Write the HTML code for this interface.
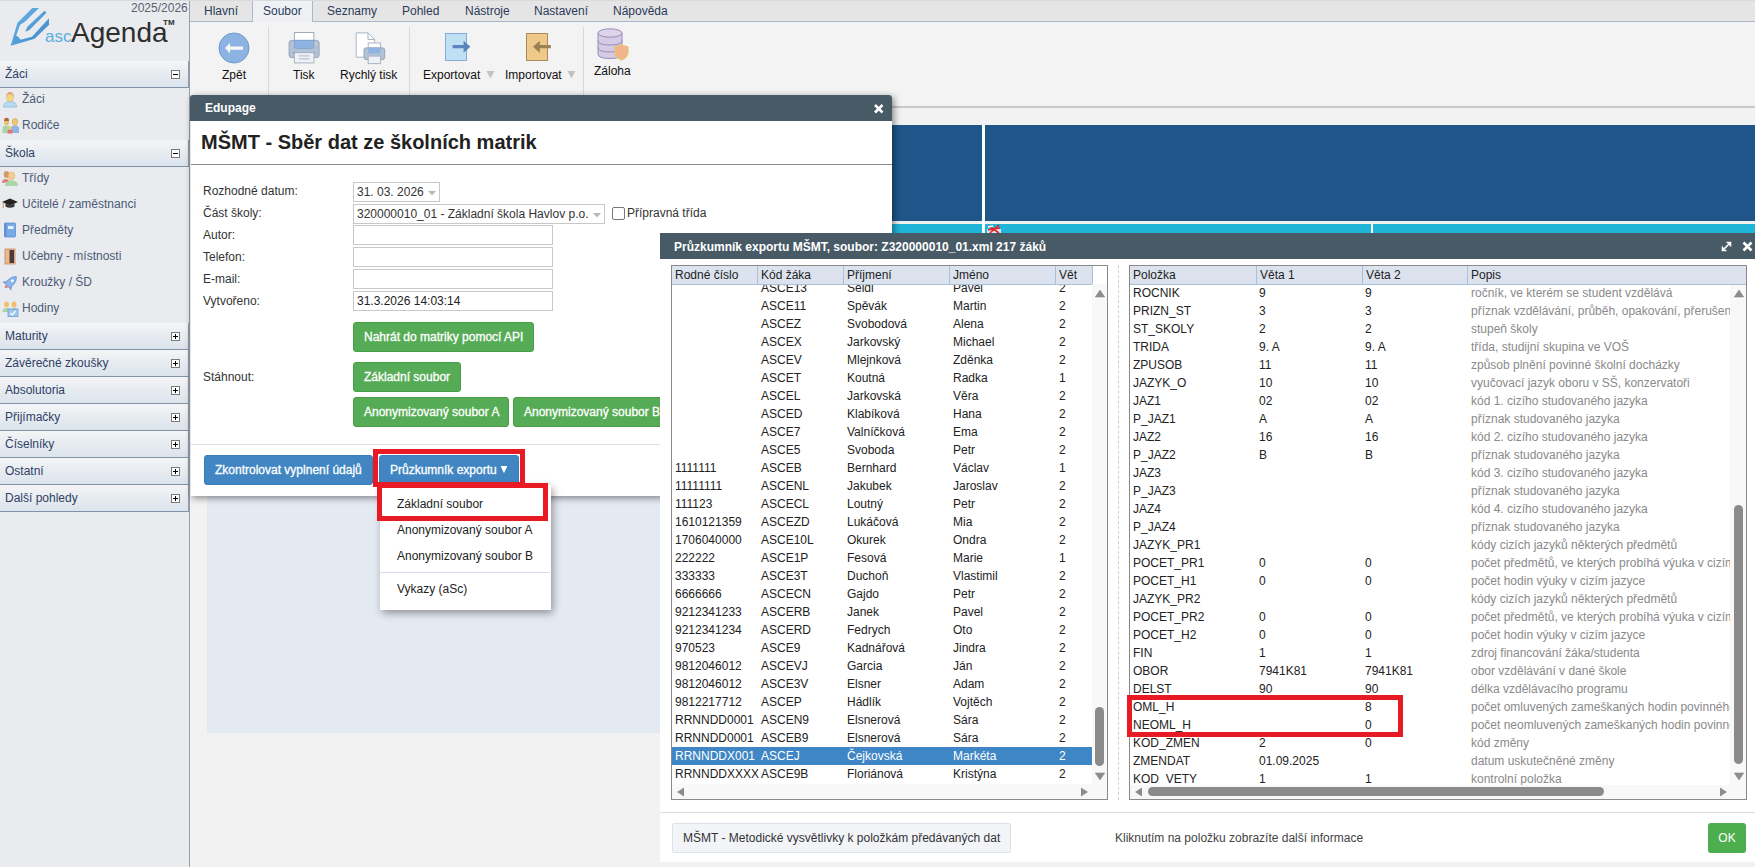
<!DOCTYPE html><html><head><meta charset="utf-8"><style>
*{box-sizing:border-box;margin:0;padding:0}
html,body{width:1755px;height:867px;overflow:hidden;font-family:"Liberation Sans",sans-serif;font-size:12px;background:#f2f2f2;position:relative;color:#222}
.a{position:absolute}
.t{position:absolute;line-height:14px;white-space:nowrap}
#side{left:0;top:0;width:190px;height:867px;background:#e9ebee;border-right:1px solid #999ea6}
.sh{position:absolute;left:0;width:189px;height:27px;background:linear-gradient(#f4f5f6,#dbe3ec);border-bottom:1px solid #8293a8;border-right:1px solid #8e9aab;color:#2e4165;line-height:26px;padding-left:5px}
.sh .bx{position:absolute;left:171px;top:9px;width:9px;height:9px;border:1px solid #7a7a7a;background:#fff}
.sh .bx:before{content:"";position:absolute;left:1px;top:3px;width:5px;height:1px;background:#000}
.sh .bx.p:after{content:"";position:absolute;left:3px;top:1px;width:1px;height:5px;background:#000}
.si{position:absolute;left:0;width:189px;height:26px;color:#4b5a77;line-height:22px;padding-left:22px}
.si svg{position:absolute;left:2px;top:3px}
#tabs{left:190px;top:0;width:1565px;height:22px;background:#e5e5e5;border-bottom:1px solid #a9b8ca}
.tab{position:absolute;top:0;height:22px;color:#2a3a58;line-height:30px;text-align:center}
#ribbon{left:190px;top:22px;width:1565px;height:86px;background:#f3f3f3;border-bottom:2px solid #c9c9c9}
.rl{position:absolute;color:#111;white-space:nowrap;line-height:14px}
.sep{position:absolute;top:27px;width:1px;height:68px;background:#d9d9d9}
</style></head><body>
<div id="side" class="a">
<svg class="a" style="left:0;top:0" width="190" height="60" viewBox="0 0 190 60">
<defs><linearGradient id="pg" x1="0" y1="0" x2="1" y2="1"><stop offset="0" stop-color="#6cb7e6"/><stop offset="1" stop-color="#3b84cb"/></linearGradient></defs>
<path fill="url(#pg)" d="M10.7,45.8 L17.5,22.7 L32.3,8.1 L39,8.1 L25.2,21.6 L20,25 L16.2,35.6 Q19,37 20.6,39.8 L32,36.7 L48.9,18.2 L49.1,24.7 L34.6,38.7 Z"/>
<path fill="url(#pg)" d="M44.5,10.7 L46.5,12.8 L29.4,29.9 L25.2,31.7 L27.3,26.8 Z"/>
</svg>
<div class="t" style="left:131px;top:1px;color:#5b6270;font-size:12px">2025/2026</div>
<div class="t" style="left:45px;top:27px;color:#5aaee0;font-size:17px;line-height:20px">asc</div>
<div class="t" style="left:71px;top:17px;color:#2e2e2e;font-size:28px;line-height:32px">Agenda</div>
<div class="t" style="left:163px;top:18px;color:#2e2e2e;font-size:8px;font-weight:bold;line-height:10px">TM</div>
<div class="sh" style="top:61px">Žáci<div class="bx"></div></div>
<div class="si" style="top:88px"><svg width="16" height="17" viewBox="0 0 16 17"><path d="M1.5,16 Q1.5,10.5 8,10.5 Q14.5,10.5 14.5,16Z" fill="#b9dcf2" stroke="#90b8d8" stroke-width=".8"/><ellipse cx="8" cy="6" rx="3.6" ry="4.6" fill="#f0d88a" stroke="#d4b260" stroke-width=".6"/><path d="M4.3,5.5 Q4.5,1 8,1 Q11.5,1 11.7,5.5 Q10,3 8,3.5 Q6,3 4.3,5.5Z" fill="#e8a77c"/></svg>Žáci</div>
<div class="si" style="top:114px"><svg width="18" height="17" viewBox="0 0 18 17"><path d="M0.5,16 L0.5,11 Q0.5,8.5 4.5,8.5 Q8.5,8.5 8.5,11 L8.5,16Z" fill="#a8d5a5"/><ellipse cx="4.5" cy="5" rx="2.5" ry="3.3" fill="#e8c070"/><path d="M2,4 Q2,0.8 4.5,0.8 Q7,0.8 7,4Z" fill="#a86c3c"/><path d="M9,16 L9,11 Q9,8.5 13,8.5 Q17,8.5 17,11 L17,16Z" fill="#8db6e4"/><ellipse cx="13" cy="5" rx="2.6" ry="3.4" fill="#f0c878" stroke="#dcaa58" stroke-width=".8"/><path d="M5.5,16.5 L5.5,14 Q5.5,12.5 8,12.5 Q10.5,12.5 10.5,14 L10.5,16.5Z" fill="#e57373"/><circle cx="8" cy="10.8" r="1.7" fill="#f0c878"/></svg>Rodiče</div>
<div class="sh" style="top:140px">Škola<div class="bx"></div></div>
<div class="si" style="top:167px"><svg width="16" height="17" viewBox="0 0 16 17"><path d="M0,13 Q0,9 4,9 Q7,9 7,12Z" fill="#e57b7b"/><ellipse cx="4.5" cy="4.5" rx="2.8" ry="3.5" fill="#d69a6a"/><path d="M3,16 Q3,10.5 9.5,10.5 Q16,10.5 16,16Z" fill="#a9d6a6"/><ellipse cx="9.5" cy="6" rx="3.2" ry="4" fill="#f3cf8c" stroke="#d8b070" stroke-width=".6"/></svg>Třídy</div>
<div class="si" style="top:193px"><svg width="16" height="17" viewBox="0 0 16 17"><path d="M0,6 L8,2.5 L16,6 L8,9.5Z" fill="#222"/><path d="M3.5,7.5 L3.5,10.5 Q8,13 12.5,10.5 L12.5,7.5 L8,9.5Z" fill="#333"/><path d="M1.3,6.5 L1.3,12" stroke="#d49a5a" stroke-width="1"/></svg>Učitelé / zaměstnanci</div>
<div class="si" style="top:219px"><svg width="16" height="17" viewBox="0 0 16 17"><rect x="2.5" y="1" width="11" height="14" rx="1" fill="#7aaae6" stroke="#5b8fd0" stroke-width=".8"/><rect x="2.5" y="1" width="2" height="14" fill="#5b8fd0"/><rect x="6" y="4" width="5.5" height="3" fill="#e8f0fa"/></svg>Předměty</div>
<div class="si" style="top:245px"><svg width="16" height="17" viewBox="0 0 16 17"><rect x="3" y="1" width="10" height="15" fill="#f0b88a" stroke="#c08860" stroke-width=".8"/><rect x="7.5" y="2" width="4.5" height="13" fill="#4a3b3b"/></svg>Učebny - místnosti</div>
<div class="si" style="top:271px"><svg width="17" height="17" viewBox="0 0 17 17"><g transform="rotate(45 8.5 8.5)"><path d="M8.5,0.3 Q12,3 12,8 L12,13 L5,13 L5,8 Q5,3 8.5,0.3Z" fill="#8ab8ea" stroke="#5e94d4" stroke-width=".8"/><path d="M5,9.5 L2.3,14 L5,13.5Z M12,9.5 L14.7,14 L12,13.5Z" fill="#6e9ed6"/><circle cx="8.5" cy="6" r="1.4" fill="#fff"/><path d="M6.5,13.3 L8.5,16.8 L10.5,13.3Z" fill="#e57373"/></g></svg>Kroužky / ŠD</div>
<div class="si" style="top:297px"><svg width="17" height="17" viewBox="0 0 17 17"><ellipse cx="4.5" cy="4.5" rx="2.5" ry="3" fill="#f0c070"/><ellipse cx="12" cy="4.5" rx="2.5" ry="3" fill="#f0c070"/><path d="M0.5,12 Q0.5,8 4.5,8 Q8.5,8 8.5,12Z" fill="#a8d5a5"/><path d="M8,12 Q8,8 12,8 Q16,8 16,12Z" fill="#a8d5a5"/><rect x="6" y="9" width="10" height="7.5" fill="#9cc6ee" stroke="#6e9ed6" stroke-width=".8"/><path d="M8.5,13 L10.3,14.8 L13.5,11" stroke="#fff" stroke-width="1.2" fill="none"/></svg>Hodiny</div>
<div class="sh" style="top:323px">Maturity<div class="bx p"></div></div>
<div class="sh" style="top:350px">Závěrečné zkoušky<div class="bx p"></div></div>
<div class="sh" style="top:377px">Absolutoria<div class="bx p"></div></div>
<div class="sh" style="top:404px">Přijímačky<div class="bx p"></div></div>
<div class="sh" style="top:431px">Číselníky<div class="bx p"></div></div>
<div class="sh" style="top:458px">Ostatní<div class="bx p"></div></div>
<div class="sh" style="top:485px">Další pohledy<div class="bx p"></div></div>
</div>
<div id="tabs" class="a">
<div class="tab" style="left:62px;width:61px;background:#eef0f3;border-left:1px solid #a9b8ca;border-right:1px solid #a9b8ca;height:22px"></div>
<div class="t" style="left:14px;top:4px;color:#2a3a58">Hlavní</div>
<div class="t" style="left:73px;top:4px;color:#2a3a58">Soubor</div>
<div class="t" style="left:137px;top:4px;color:#2a3a58">Seznamy</div>
<div class="t" style="left:212px;top:4px;color:#2a3a58">Pohled</div>
<div class="t" style="left:275px;top:4px;color:#2a3a58">Nástroje</div>
<div class="t" style="left:344px;top:4px;color:#2a3a58">Nastavení</div>
<div class="t" style="left:423px;top:4px;color:#2a3a58">Nápověda</div>
</div>
<div id="ribbon" class="a"></div>
<div class="sep" style="left:268px"></div><div class="sep" style="left:409px"></div><div class="sep" style="left:583px"></div>
<svg class="a" style="left:218px;top:32px" width="32" height="32" viewBox="0 0 32 32"><circle cx="16" cy="16" r="15" fill="#8db3e3" stroke="#6d98d0" stroke-width="1"/><path d="M7,16.1 L12,10.9 L12,14.4 L25,14.4 L25,17.8 L12,17.8 L12,21.2Z" fill="#f7f7f7"/></svg>
<svg class="a" style="left:288px;top:32px" width="32" height="32" viewBox="0 0 32 32">
<rect x="6.4" y="0.5" width="19.5" height="8" fill="#fff" stroke="#9eabbd" stroke-width="1"/>
<rect x="1.1" y="8.4" width="30" height="17.2" rx="2.5" fill="#b3c1d4" stroke="#95a5bb" stroke-width="1"/>
<path d="M6.4,8.4 L25.9,8.4 L25.9,14.6 Q25.9,16.6 23.9,16.6 L8.4,16.6 Q6.4,16.6 6.4,14.6Z" fill="#8fb3e3" stroke="#7a9fd0" stroke-width=".8"/>
<rect x="5" y="20" width="22" height="2" fill="#8a9ab0"/>
<rect x="6.4" y="20.7" width="19.5" height="10.2" fill="#eef2f7" stroke="#a9b5c5" stroke-width="1"/>
<path d="M10.9,23.9 L21.4,23.9 M10.9,26.9 L21.4,26.9" stroke="#a9b6c8" stroke-width="1"/>
<rect x="27" y="11" width="1.6" height="1.6" fill="#f4e08a"/>
</svg>
<svg class="a" style="left:355px;top:32px" width="32" height="33" viewBox="0 0 32 33">
<path d="M1.2,0.9 L13,0.9 L19.6,7.5 L19.6,25.2 L1.2,25.2Z" fill="#fff" stroke="#a9b5c5" stroke-width="1"/>
<path d="M13,0.9 L13,7.5 L19.6,7.5" fill="none" stroke="#a9b5c5" stroke-width="1"/>
<rect x="13.2" y="11" width="12.4" height="5" fill="#fff" stroke="#a9b5c5" stroke-width="1"/>
<rect x="9" y="15.9" width="20.7" height="11.6" rx="2" fill="#b3c1d4" stroke="#95a5bb" stroke-width="1"/>
<path d="M13.2,15.9 L25.6,15.9 L25.6,20 Q25.6,21.5 24,21.5 L14.8,21.5 Q13.2,21.5 13.2,20Z" fill="#8fb3e3"/>
<rect x="13.2" y="24.1" width="12.4" height="7.5" fill="#eef2f7" stroke="#a9b5c5" stroke-width="1"/>
</svg>
<svg class="a" style="left:444px;top:32px" width="30" height="30" viewBox="0 0 30 30">
<rect x="1.5" y="1.5" width="21" height="27" fill="#bfdff3" stroke="#86a9d6" stroke-width="1"/>
<path d="M8.6,13.1 L19.6,13.1 L19.6,8.7 L26.4,14.65 L19.6,20.7 L19.6,16.2 L8.6,16.2Z" fill="#5a84bd"/>
</svg>
<svg class="a" style="left:525px;top:32px" width="30" height="30" viewBox="0 0 30 30">
<rect x="1.5" y="1.5" width="21" height="27" fill="#eec98a" stroke="#a98b58" stroke-width="1"/>
<path d="M25.8,13.1 L14.8,13.1 L14.8,8.7 L8,14.65 L14.8,20.7 L14.8,16.2 L25.8,16.2Z" fill="#9a8054"/>
</svg>
<svg class="a" style="left:597px;top:28px" width="34" height="34" viewBox="0 0 34 34">
<path d="M1,5 L1,26 Q1,30.5 13,30.5 Q25,30.5 25,26 L25,5Z" fill="#d5cbe4" stroke="#9d8cbb" stroke-width="1"/>
<ellipse cx="13" cy="5" rx="12" ry="4.2" fill="#ddd4ea" stroke="#9d8cbb" stroke-width="1"/>
<path d="M1,12.5 Q1,17 13,17 Q25,17 25,12.5 M1,19.5 Q1,24 13,24 Q25,24 25,19.5" fill="none" stroke="#9d8cbb" stroke-width="1"/>
<path d="M24.5,17 L31,19 L31,24 Q31,29 24.5,32 Q18,29 18,24 L18,19Z" fill="#f2b48f" stroke="#e3c66e" stroke-width="1.3"/>
</svg>
<div class="rl" style="left:222px;top:68px">Zpět</div>
<div class="rl" style="left:293px;top:68px">Tisk</div>
<div class="rl" style="left:340px;top:68px">Rychlý tisk</div>
<div class="rl" style="left:423px;top:68px">Exportovat</div>
<div class="rl" style="left:505px;top:68px">Importovat</div>
<div class="rl" style="left:594px;top:64px">Záloha</div>
<svg class="a" style="left:486px;top:70px" width="10" height="9"><path d="M0.5,1 L8.5,1 L4.5,8.5Z" fill="#c2c2c2"/></svg>
<svg class="a" style="left:567px;top:70px" width="10" height="9"><path d="M0.5,1 L8.5,1 L4.5,8.5Z" fill="#c2c2c2"/></svg>
<div class="a" style="left:891px;top:125px;width:864px;height:96px;background:#20558a"></div>
<div class="a" style="left:891px;top:224px;width:864px;height:10px;background:#1fb5d9"></div>
<div class="a" style="left:982px;top:125px;width:3px;height:109px;background:#fff"></div>
<div class="a" style="left:1371px;top:224px;width:2px;height:10px;background:#fff"></div>
<svg class="a" style="left:986px;top:224px" width="16" height="10" viewBox="0 0 16 10"><rect x="1" y="5" width="14" height="5" fill="#cfe8f8"/><path d="M3,2 L13,9 M13,1 L4,9 M2,6 L14,4" stroke="#ee2222" stroke-width="1.6"/><path d="M2,3 L7,2" stroke="#fff" stroke-width="1.5"/></svg>
<div class="a" style="left:207px;top:495px;width:460px;height:238px;background:#e4eaf2"></div>
<style>
#d1{left:190px;top:95px;width:702px;height:401px;background:#fff;box-shadow:2px 2px 7px rgba(0,0,0,.45);border-radius:3px 3px 0 0}
.inp{position:absolute;background:#fff;border:1px solid #c8c8c8}
.lb{position:absolute;color:#333;white-space:nowrap;line-height:14px}
.gb{position:absolute;background:#56ac56;border:1px solid #47a047;color:#fff;border-radius:3px;white-space:nowrap;padding-left:10px;font-size:12px;-webkit-text-stroke:0.3px #fff}
.bb{position:absolute;background:#4186c2;border:1px solid #3a7cb8;color:#fff;border-radius:3px;white-space:nowrap;font-size:12px;-webkit-text-stroke:0.3px #fff}
.red{position:absolute;border:5px solid #e81b24}
</style>
<div id="d1" class="a">
<div class="a" style="left:0;top:0;width:702px;height:26px;background:#475a66;border-radius:3px 3px 0 0"></div>
<div class="t" style="left:15px;top:6px;color:#fff;font-weight:bold">Edupage</div>
<svg class="a" style="left:684px;top:9px" width="10" height="10" viewBox="0 0 10 10"><path d="M1,1 L8.5,8.5 M8.5,1 L1,8.5" stroke="#fff" stroke-width="2.5"/></svg>
<div class="t" style="left:11px;top:35px;font-size:20px;line-height:24px;font-weight:bold;color:#222">MŠMT - Sběr dat ze školních matrik</div>
<div class="a" style="left:1px;top:69px;width:701px;height:1px;background:#8a8a8a"></div>
<div class="a" style="left:0;top:26px;width:1px;height:375px;background:#e6e6e6"></div>
<div class="lb" style="left:13px;top:89px">Rozhodné datum:</div>
<div class="lb" style="left:13px;top:111px">Část školy:</div>
<div class="lb" style="left:13px;top:133px">Autor:</div>
<div class="lb" style="left:13px;top:155px">Telefon:</div>
<div class="lb" style="left:13px;top:177px">E-mail:</div>
<div class="lb" style="left:13px;top:199px">Vytvořeno:</div>
<div class="inp" style="left:163px;top:87px;width:87px;height:20px"></div>
<div class="t" style="left:167px;top:90px;color:#333">31. 03. 2026</div>
<svg class="a" style="left:238px;top:96px" width="8" height="5"><path d="M0,0 L8,0 L4,4.5Z" fill="#b8b8b8"/></svg>
<div class="inp" style="left:163px;top:109px;width:252px;height:20px"></div>
<div class="t" style="left:167px;top:112px;color:#333">320000010_01 - Základní škola Havlov p.o.</div>
<svg class="a" style="left:403px;top:118px" width="8" height="5"><path d="M0,0 L8,0 L4,4.5Z" fill="#b8b8b8"/></svg>
<div class="inp" style="left:422px;top:112px;width:13px;height:13px;border-color:#777;border-radius:2px"></div>
<div class="t" style="left:437px;top:111px;color:#333">Přípravná třída</div>
<div class="inp" style="left:163px;top:130px;width:200px;height:20px"></div>
<div class="inp" style="left:163px;top:152px;width:200px;height:20px"></div>
<div class="inp" style="left:163px;top:174px;width:200px;height:20px"></div>
<div class="inp" style="left:163px;top:196px;width:200px;height:20px"></div>
<div class="t" style="left:167px;top:199px;color:#222">31.3.2026 14:03:14</div>
<div class="gb" style="left:163px;top:227px;width:181px;height:30px;line-height:29px">Nahrát do matriky pomocí API</div>
<div class="lb" style="left:13px;top:275px">Stáhnout:</div>
<div class="gb" style="left:163px;top:267px;width:108px;height:30px;line-height:29px">Základní soubor</div>
<div class="gb" style="left:163px;top:302px;width:156px;height:30px;line-height:29px">Anonymizovaný soubor A</div>
<div class="gb" style="left:323px;top:302px;width:160px;height:30px;line-height:29px">Anonymizovaný soubor B</div>
<div class="a" style="left:0;top:349px;width:700px;height:1px;background:#dedede"></div>
<div class="bb" style="left:14px;top:360px;width:169px;height:30px;line-height:29px;padding-left:10px">Zkontrolovat vyplnení údajů</div>
<div class="bb" style="left:189px;top:360px;width:140px;height:30px;line-height:29px;padding-left:10px">Průzkumník exportu</div>
</div>
<svg class="a" style="left:500px;top:465px" width="8" height="9"><path d="M0.6,1 L7.4,1 L4,8.2Z" fill="#fff"/></svg>
<div class="red" style="left:373px;top:449px;width:152px;height:38px"></div>
<div class="a" style="left:380px;top:485px;width:171px;height:125px;background:#fff;box-shadow:2px 3px 8px rgba(0,0,0,.38)"></div>
<div class="t" style="left:397px;top:497px;color:#222">Základní soubor</div>
<div class="t" style="left:397px;top:523px;color:#222">Anonymizovaný soubor A</div>
<div class="t" style="left:397px;top:549px;color:#222">Anonymizovaný soubor B</div>
<div class="t" style="left:397px;top:582px;color:#222">Vykazy (aSc)</div>
<div class="a" style="left:380px;top:572px;width:170px;height:1px;background:#d5dde8"></div>
<div class="red" style="left:377px;top:483px;width:171px;height:38px"></div>
<style>
#d2{left:660px;top:234px;width:1095px;height:628px;background:#fff}
.tb{position:absolute;border:1px solid #8a8a8a;background:#fff;overflow:hidden}
.th{position:absolute;top:0;height:19px;background:#dce3ee;border-bottom:1px solid #a9c0da}
.thc{position:absolute;top:0;height:18px;border-left:1px solid #a9c0da;line-height:18px;padding-left:3px;color:#222;white-space:nowrap}
.row{position:absolute;left:0;height:18px;line-height:18px;white-space:nowrap;color:#222}
.row span{position:absolute;top:0}
.row.sel{background:#3e86c5;color:#fff}
.g{color:#8a8a8a}
</style>
<div id="d2" class="a">
<div class="a" style="left:0;top:-1px;width:1095px;height:26px;background:#475a66"></div>
<div class="t" style="left:14px;top:6px;color:#fff;font-weight:bold">Průzkumník exportu MŠMT, soubor: Z320000010_01.xml 217 žáků</div>
<svg class="a" style="left:1061px;top:7px" width="11" height="11" viewBox="0 0 11 11"><path d="M2,9 L9,2 M5.5,1.5 L9.5,1.5 L9.5,5.5 M1.5,5.5 L1.5,9.5 L5.5,9.5" stroke="#fff" stroke-width="1.6" fill="none"/></svg>
<svg class="a" style="left:1082px;top:7px" width="11" height="11" viewBox="0 0 11 11"><path d="M1.5,1.5 L9.5,9.5 M9.5,1.5 L1.5,9.5" stroke="#fff" stroke-width="2.6"/></svg>
<div class="tb" style="left:11px;top:31px;width:437px;height:535px">
<div class="a" style="left:0;top:0;width:436px;height:518px;overflow:hidden">
<div class="row" style="top:13px;width:420px"><span style="left:3px"></span><span style="left:89px">ASCE13</span><span style="left:175px">Seidl</span><span style="left:281px">Pavel</span><span style="left:387px">2</span></div>
<div class="row" style="top:31px;width:420px"><span style="left:3px"></span><span style="left:89px">ASCE11</span><span style="left:175px">Spěvák</span><span style="left:281px">Martin</span><span style="left:387px">2</span></div>
<div class="row" style="top:49px;width:420px"><span style="left:3px"></span><span style="left:89px">ASCEZ</span><span style="left:175px">Svobodová</span><span style="left:281px">Alena</span><span style="left:387px">2</span></div>
<div class="row" style="top:67px;width:420px"><span style="left:3px"></span><span style="left:89px">ASCEX</span><span style="left:175px">Jarkovský</span><span style="left:281px">Michael</span><span style="left:387px">2</span></div>
<div class="row" style="top:85px;width:420px"><span style="left:3px"></span><span style="left:89px">ASCEV</span><span style="left:175px">Mlejnková</span><span style="left:281px">Zděnka</span><span style="left:387px">2</span></div>
<div class="row" style="top:103px;width:420px"><span style="left:3px"></span><span style="left:89px">ASCET</span><span style="left:175px">Koutná</span><span style="left:281px">Radka</span><span style="left:387px">1</span></div>
<div class="row" style="top:121px;width:420px"><span style="left:3px"></span><span style="left:89px">ASCEL</span><span style="left:175px">Jarkovská</span><span style="left:281px">Věra</span><span style="left:387px">2</span></div>
<div class="row" style="top:139px;width:420px"><span style="left:3px"></span><span style="left:89px">ASCED</span><span style="left:175px">Klabíková</span><span style="left:281px">Hana</span><span style="left:387px">2</span></div>
<div class="row" style="top:157px;width:420px"><span style="left:3px"></span><span style="left:89px">ASCE7</span><span style="left:175px">Valníčková</span><span style="left:281px">Ema</span><span style="left:387px">2</span></div>
<div class="row" style="top:175px;width:420px"><span style="left:3px"></span><span style="left:89px">ASCE5</span><span style="left:175px">Svoboda</span><span style="left:281px">Petr</span><span style="left:387px">2</span></div>
<div class="row" style="top:193px;width:420px"><span style="left:3px">1111111</span><span style="left:89px">ASCEB</span><span style="left:175px">Bernhard</span><span style="left:281px">Václav</span><span style="left:387px">1</span></div>
<div class="row" style="top:211px;width:420px"><span style="left:3px">11111111</span><span style="left:89px">ASCENL</span><span style="left:175px">Jakubek</span><span style="left:281px">Jaroslav</span><span style="left:387px">2</span></div>
<div class="row" style="top:229px;width:420px"><span style="left:3px">111123</span><span style="left:89px">ASCECL</span><span style="left:175px">Loutný</span><span style="left:281px">Petr</span><span style="left:387px">2</span></div>
<div class="row" style="top:247px;width:420px"><span style="left:3px">1610121359</span><span style="left:89px">ASCEZD</span><span style="left:175px">Lukáčová</span><span style="left:281px">Mia</span><span style="left:387px">2</span></div>
<div class="row" style="top:265px;width:420px"><span style="left:3px">1706040000</span><span style="left:89px">ASCE10L</span><span style="left:175px">Okurek</span><span style="left:281px">Ondra</span><span style="left:387px">2</span></div>
<div class="row" style="top:283px;width:420px"><span style="left:3px">222222</span><span style="left:89px">ASCE1P</span><span style="left:175px">Fesová</span><span style="left:281px">Marie</span><span style="left:387px">1</span></div>
<div class="row" style="top:301px;width:420px"><span style="left:3px">333333</span><span style="left:89px">ASCE3T</span><span style="left:175px">Duchoň</span><span style="left:281px">Vlastimil</span><span style="left:387px">2</span></div>
<div class="row" style="top:319px;width:420px"><span style="left:3px">6666666</span><span style="left:89px">ASCECN</span><span style="left:175px">Gajdo</span><span style="left:281px">Petr</span><span style="left:387px">2</span></div>
<div class="row" style="top:337px;width:420px"><span style="left:3px">9212341233</span><span style="left:89px">ASCERB</span><span style="left:175px">Janek</span><span style="left:281px">Pavel</span><span style="left:387px">2</span></div>
<div class="row" style="top:355px;width:420px"><span style="left:3px">9212341234</span><span style="left:89px">ASCERD</span><span style="left:175px">Fedrych</span><span style="left:281px">Oto</span><span style="left:387px">2</span></div>
<div class="row" style="top:373px;width:420px"><span style="left:3px">970523</span><span style="left:89px">ASCE9</span><span style="left:175px">Kadnářová</span><span style="left:281px">Jindra</span><span style="left:387px">2</span></div>
<div class="row" style="top:391px;width:420px"><span style="left:3px">9812046012</span><span style="left:89px">ASCEVJ</span><span style="left:175px">Garcia</span><span style="left:281px">Ján</span><span style="left:387px">2</span></div>
<div class="row" style="top:409px;width:420px"><span style="left:3px">9812046012</span><span style="left:89px">ASCE3V</span><span style="left:175px">Elsner</span><span style="left:281px">Adam</span><span style="left:387px">2</span></div>
<div class="row" style="top:427px;width:420px"><span style="left:3px">9812217712</span><span style="left:89px">ASCEP</span><span style="left:175px">Hádlík</span><span style="left:281px">Vojtěch</span><span style="left:387px">2</span></div>
<div class="row" style="top:445px;width:420px"><span style="left:3px">RRNNDD0001</span><span style="left:89px">ASCEN9</span><span style="left:175px">Elsnerová</span><span style="left:281px">Sára</span><span style="left:387px">2</span></div>
<div class="row" style="top:463px;width:420px"><span style="left:3px">RRNNDD0001</span><span style="left:89px">ASCEB9</span><span style="left:175px">Elsnerová</span><span style="left:281px">Sára</span><span style="left:387px">2</span></div>
<div class="row sel" style="top:481px;width:420px"><span style="left:3px">RRNNDDX001</span><span style="left:89px">ASCEJ</span><span style="left:175px">Čejkovská</span><span style="left:281px">Markéta</span><span style="left:387px">2</span></div>
<div class="row" style="top:499px;width:420px"><span style="left:3px">RRNNDDXXXX</span><span style="left:89px">ASCE9B</span><span style="left:175px">Floriánová</span><span style="left:281px">Kristýna</span><span style="left:387px">2</span></div>
</div>
<div class="th" style="left:0;width:421px;border-right:1px solid #a9c0da">
<div class="thc" style="left:-1px;width:86px;border-left:none;padding-left:4px">Rodné číslo</div>
<div class="thc" style="left:85px;width:86px;padding-left:3px">Kód žáka</div>
<div class="thc" style="left:171px;width:106px;padding-left:3px">Příjmení</div>
<div class="thc" style="left:277px;width:106px;padding-left:3px">Jméno</div>
<div class="thc" style="left:383px;width:37px;padding-left:3px">Vět</div>
</div>
<div class="a" style="left:420px;top:18px;width:16px;height:500px;background:#f8f8f8"></div>
<div class="a" style="left:0;top:518px;width:436px;height:15px;background:#f8f8f8"></div>
<div class="a" style="left:423px;top:441px;width:9px;height:59px;background:#8a8a8a;border-radius:5px"></div>
<svg class="a" style="left:423px;top:23px" width="11" height="9"><path d="M0.3,8 L9.7,8 L5,1Z" stroke="#8c8c8c" stroke-width=".6" stroke-linejoin="round" fill="#8c8c8c"/></svg>
<svg class="a" style="left:423px;top:506px" width="11" height="9"><path d="M0.3,1 L9.7,1 L5,8Z" stroke="#8c8c8c" stroke-width=".6" stroke-linejoin="round" fill="#8c8c8c"/></svg>
<svg class="a" style="left:4px;top:521px" width="9" height="10"><path d="M8,0.5 L8,9.5 L1,5Z" fill="#8c8c8c"/></svg>
<svg class="a" style="left:408px;top:521px" width="9" height="10"><path d="M1,0.5 L1,9.5 L8,5Z" fill="#8c8c8c"/></svg>
</div>
<div class="a" style="left:458px;top:31px;width:0;height:535px;border-left:1px dashed #d0d0d0"></div>
<div class="tb" style="left:469px;top:31px;width:618px;height:535px">
<div class="a" style="left:0;top:0;width:600px;height:519px;overflow:hidden">
<div class="row" style="top:18px;width:601px"><span class="" style="left:3px">ROCNIK</span><span class="" style="left:129px">9</span><span class="" style="left:235px">9</span><span class="g" style="left:341px">ročník, ve kterém se student vzdělává</span></div>
<div class="row" style="top:36px;width:601px"><span class="" style="left:3px">PRIZN_ST</span><span class="" style="left:129px">3</span><span class="" style="left:235px">3</span><span class="g" style="left:341px">příznak vzdělávání, průběh, opakování, přerušen</span></div>
<div class="row" style="top:54px;width:601px"><span class="" style="left:3px">ST_SKOLY</span><span class="" style="left:129px">2</span><span class="" style="left:235px">2</span><span class="g" style="left:341px">stupeň školy</span></div>
<div class="row" style="top:72px;width:601px"><span class="" style="left:3px">TRIDA</span><span class="" style="left:129px">9. A</span><span class="" style="left:235px">9. A</span><span class="g" style="left:341px">třída, studijní skupina ve VOŠ</span></div>
<div class="row" style="top:90px;width:601px"><span class="" style="left:3px">ZPUSOB</span><span class="" style="left:129px">11</span><span class="" style="left:235px">11</span><span class="g" style="left:341px">způsob plnění povinné školní docházky</span></div>
<div class="row" style="top:108px;width:601px"><span class="" style="left:3px">JAZYK_O</span><span class="" style="left:129px">10</span><span class="" style="left:235px">10</span><span class="g" style="left:341px">vyučovací jazyk oboru v SŠ, konzervatoři</span></div>
<div class="row" style="top:126px;width:601px"><span class="" style="left:3px">JAZ1</span><span class="" style="left:129px">02</span><span class="" style="left:235px">02</span><span class="g" style="left:341px">kód 1. cizího studovaného jazyka</span></div>
<div class="row" style="top:144px;width:601px"><span class="" style="left:3px">P_JAZ1</span><span class="" style="left:129px">A</span><span class="" style="left:235px">A</span><span class="g" style="left:341px">příznak studovaného jazyka</span></div>
<div class="row" style="top:162px;width:601px"><span class="" style="left:3px">JAZ2</span><span class="" style="left:129px">16</span><span class="" style="left:235px">16</span><span class="g" style="left:341px">kód 2. cizího studovaného jazyka</span></div>
<div class="row" style="top:180px;width:601px"><span class="" style="left:3px">P_JAZ2</span><span class="" style="left:129px">B</span><span class="" style="left:235px">B</span><span class="g" style="left:341px">příznak studovaného jazyka</span></div>
<div class="row" style="top:198px;width:601px"><span class="" style="left:3px">JAZ3</span><span class="" style="left:129px"></span><span class="" style="left:235px"></span><span class="g" style="left:341px">kód 3. cizího studovaného jazyka</span></div>
<div class="row" style="top:216px;width:601px"><span class="" style="left:3px">P_JAZ3</span><span class="" style="left:129px"></span><span class="" style="left:235px"></span><span class="g" style="left:341px">příznak studovaného jazyka</span></div>
<div class="row" style="top:234px;width:601px"><span class="" style="left:3px">JAZ4</span><span class="" style="left:129px"></span><span class="" style="left:235px"></span><span class="g" style="left:341px">kód 4. cizího studovaného jazyka</span></div>
<div class="row" style="top:252px;width:601px"><span class="" style="left:3px">P_JAZ4</span><span class="" style="left:129px"></span><span class="" style="left:235px"></span><span class="g" style="left:341px">příznak studovaného jazyka</span></div>
<div class="row" style="top:270px;width:601px"><span class="" style="left:3px">JAZYK_PR1</span><span class="" style="left:129px"></span><span class="" style="left:235px"></span><span class="g" style="left:341px">kódy cizích jazyků některých předmětů</span></div>
<div class="row" style="top:288px;width:601px"><span class="" style="left:3px">POCET_PR1</span><span class="" style="left:129px">0</span><span class="" style="left:235px">0</span><span class="g" style="left:341px">počet předmětů, ve kterých probíhá výuka v cizím jazyce</span></div>
<div class="row" style="top:306px;width:601px"><span class="" style="left:3px">POCET_H1</span><span class="" style="left:129px">0</span><span class="" style="left:235px">0</span><span class="g" style="left:341px">počet hodin výuky v cizím jazyce</span></div>
<div class="row" style="top:324px;width:601px"><span class="" style="left:3px">JAZYK_PR2</span><span class="" style="left:129px"></span><span class="" style="left:235px"></span><span class="g" style="left:341px">kódy cizích jazyků některých předmětů</span></div>
<div class="row" style="top:342px;width:601px"><span class="" style="left:3px">POCET_PR2</span><span class="" style="left:129px">0</span><span class="" style="left:235px">0</span><span class="g" style="left:341px">počet předmětů, ve kterých probíhá výuka v cizím jazyce</span></div>
<div class="row" style="top:360px;width:601px"><span class="" style="left:3px">POCET_H2</span><span class="" style="left:129px">0</span><span class="" style="left:235px">0</span><span class="g" style="left:341px">počet hodin výuky v cizím jazyce</span></div>
<div class="row" style="top:378px;width:601px"><span class="" style="left:3px">FIN</span><span class="" style="left:129px">1</span><span class="" style="left:235px">1</span><span class="g" style="left:341px">zdroj financování žáka/studenta</span></div>
<div class="row" style="top:396px;width:601px"><span class="" style="left:3px">OBOR</span><span class="" style="left:129px">7941K81</span><span class="" style="left:235px">7941K81</span><span class="g" style="left:341px">obor vzdělávání v dané škole</span></div>
<div class="row" style="top:414px;width:601px"><span class="" style="left:3px">DELST</span><span class="" style="left:129px">90</span><span class="" style="left:235px">90</span><span class="g" style="left:341px">délka vzdělávacího programu</span></div>
<div class="row" style="top:432px;width:601px"><span class="" style="left:3px">OML_H</span><span class="" style="left:129px"></span><span class="" style="left:235px">8</span><span class="g" style="left:341px">počet omluvených zameškaných hodin povinného vyučování</span></div>
<div class="row" style="top:450px;width:601px"><span class="" style="left:3px">NEOML_H</span><span class="" style="left:129px"></span><span class="" style="left:235px">0</span><span class="g" style="left:341px">počet neomluvených zameškaných hodin povinného vyučování</span></div>
<div class="row" style="top:468px;width:601px"><span class="" style="left:3px">KOD_ZMEN</span><span class="" style="left:129px">2</span><span class="" style="left:235px">0</span><span class="g" style="left:341px">kód změny</span></div>
<div class="row" style="top:486px;width:601px"><span class="" style="left:3px">ZMENDAT</span><span class="" style="left:129px">01.09.2025</span><span class="" style="left:235px"></span><span class="g" style="left:341px">datum uskutečněné změny</span></div>
<div class="row" style="top:504px;width:601px"><span class="" style="left:3px">KOD_VETY</span><span class="" style="left:129px">1</span><span class="" style="left:235px">1</span><span class="g" style="left:341px">kontrolní položka</span></div>
</div>
<div class="th" style="left:0;width:616px">
<div class="thc" style="left:-1px;width:127px;border-left:none;padding-left:4px">Položka</div>
<div class="thc" style="left:126px;width:106px;padding-left:3px">Věta 1</div>
<div class="thc" style="left:232px;width:105px;padding-left:3px">Věta 2</div>
<div class="thc" style="left:337px;width:280px;padding-left:3px">Popis</div>
</div>
<div class="a" style="left:600px;top:19px;width:16px;height:500px;background:#f8f8f8"></div>
<div class="a" style="left:0;top:519px;width:617px;height:14px;background:#f8f8f8"></div>
<div class="a" style="left:604px;top:239px;width:9px;height:259px;background:#8a8a8a;border-radius:5px"></div>
<div class="a" style="left:18px;top:521px;width:456px;height:9px;background:#8a8a8a;border-radius:5px"></div>
<svg class="a" style="left:604px;top:23px" width="11" height="9"><path d="M0.3,8 L9.7,8 L5,1Z" stroke="#8c8c8c" stroke-width=".6" stroke-linejoin="round" fill="#8c8c8c"/></svg>
<svg class="a" style="left:604px;top:506px" width="11" height="9"><path d="M0.3,1 L9.7,1 L5,8Z" stroke="#8c8c8c" stroke-width=".6" stroke-linejoin="round" fill="#8c8c8c"/></svg>
<svg class="a" style="left:4px;top:521px" width="9" height="10"><path d="M8,0.5 L8,9.5 L1,5Z" fill="#8c8c8c"/></svg>
<svg class="a" style="left:589px;top:521px" width="9" height="10"><path d="M1,0.5 L1,9.5 L8,5Z" fill="#8c8c8c"/></svg>
</div>
<div class="a" style="left:0;top:578px;width:1095px;height:1px;background:#dcdcdc"></div>
<div class="a" style="left:12px;top:589px;width:339px;height:30px;background:#f2f4f8;border:1px solid #dde2ea;border-radius:2px"></div>
<div class="t" style="left:23px;top:597px;color:#333">MŠMT - Metodické vysvětlivky k položkám předávaných dat</div>
<div class="t" style="left:455px;top:597px;color:#444">Kliknutím na položku zobrazíte další informace</div>
<div class="a" style="left:1048px;top:589px;width:38px;height:30px;background:#4cae4c;border-radius:3px;color:#fff;line-height:30px;text-align:center">OK</div>
</div>
<div class="red" style="left:1127px;top:695px;width:276px;height:42px"></div>
<div class="a" style="left:0;top:0;width:1755px;height:1px;background:#d9dadc"></div>
</body></html>
